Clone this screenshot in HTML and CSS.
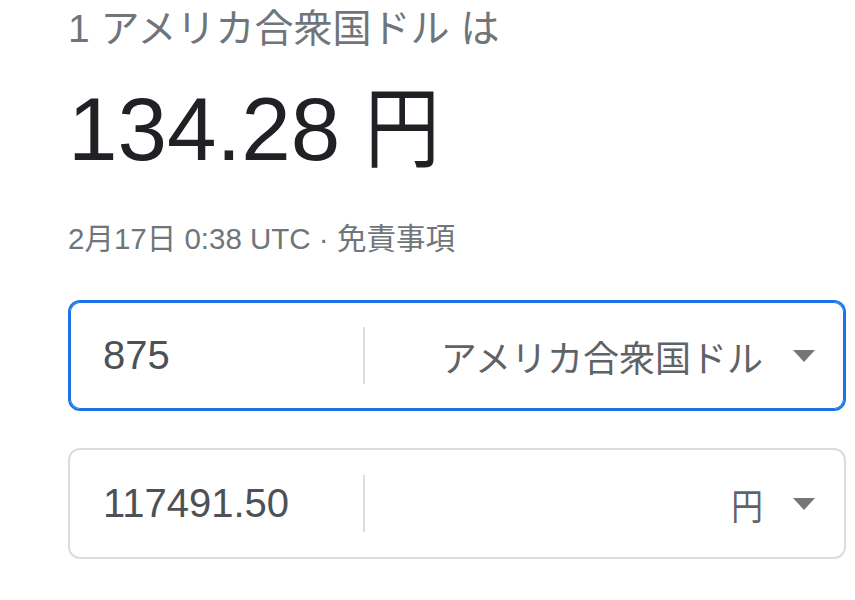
FILE: index.html
```html
<!DOCTYPE html>
<html lang="ja">
<head>
<meta charset="utf-8">
<title>通貨換算</title>
<link rel="stylesheet" href="styles.css">
</head>
<body>
<main class="converter">
  <div class="title">1 アメリカ合衆国ドル は</div>
  <div class="result">134.28 <span class="result-unit">円</span></div>
  <div class="meta">2月17日 0:38 UTC · <span class="disclaimer">免責事項</span></div>
  <div class="field field-active">
    <div class="amount">875</div>
    <div class="divider"></div>
    <div class="currency"><span class="currency-name">アメリカ合衆国ドル</span><span class="caret"></span></div>
  </div>
  <div class="field">
    <div class="amount">117491.50</div>
    <div class="divider"></div>
    <div class="currency"><span class="currency-name currency-narrow">円</span><span class="caret"></span></div>
  </div>
</main>
</body>
</html>
```

FILE: styles.css
```css
html, body {
  margin: 0;
  padding: 0;
  background: #ffffff;
}

body {
  font-family: "Liberation Sans", "Noto Sans CJK JP", sans-serif;
}

.converter {
  padding-left: 68px;
  width: 778px;
}

.title {
  font-size: 39px;
  line-height: 48px;
  padding-top: 5px;
  color: #70757a;
  white-space: nowrap;
}

.result {
  font-size: 89px;
  line-height: 100px;
  margin-top: 26px;
  color: #202124;
  white-space: nowrap;
}

.result-unit {
  display: inline-block;
  transform: scaleX(0.84);
  transform-origin: left center;
}

.meta {
  font-size: 29.5px;
  line-height: 36px;
  margin-top: 42px;
  color: #70757a;
  white-space: nowrap;
}

.field {
  box-sizing: border-box;
  display: flex;
  align-items: center;
  width: 778px;
  height: 111px;
  border: 2px solid #dadce0;
  border-radius: 12px;
  margin-top: 37px;
}

.field-active {
  margin-top: 43px;
  border-color: #1a73e8;
  box-shadow: inset 0 0 0 1px #1a73e8;
}

.amount {
  box-sizing: border-box;
  width: 293px;
  padding-left: 33px;
  font-size: 40px;
  color: #4d5156;
  white-space: nowrap;
}

.divider {
  width: 2px;
  height: 57px;
  background: #dadce0;
}

.currency {
  flex: 1;
  display: flex;
  align-items: center;
  justify-content: flex-end;
  padding-right: 29px;
  font-size: 36px;
  color: #5f6368;
  white-space: nowrap;
}

.currency-narrow {
  display: inline-block;
  transform: scaleX(0.88);
  transform-origin: right center;
}

.caret {
  width: 0;
  height: 0;
  margin-left: 30px;
  border-left: 11.5px solid transparent;
  border-right: 11.5px solid transparent;
  border-top: 12px solid #757575;
}
```
